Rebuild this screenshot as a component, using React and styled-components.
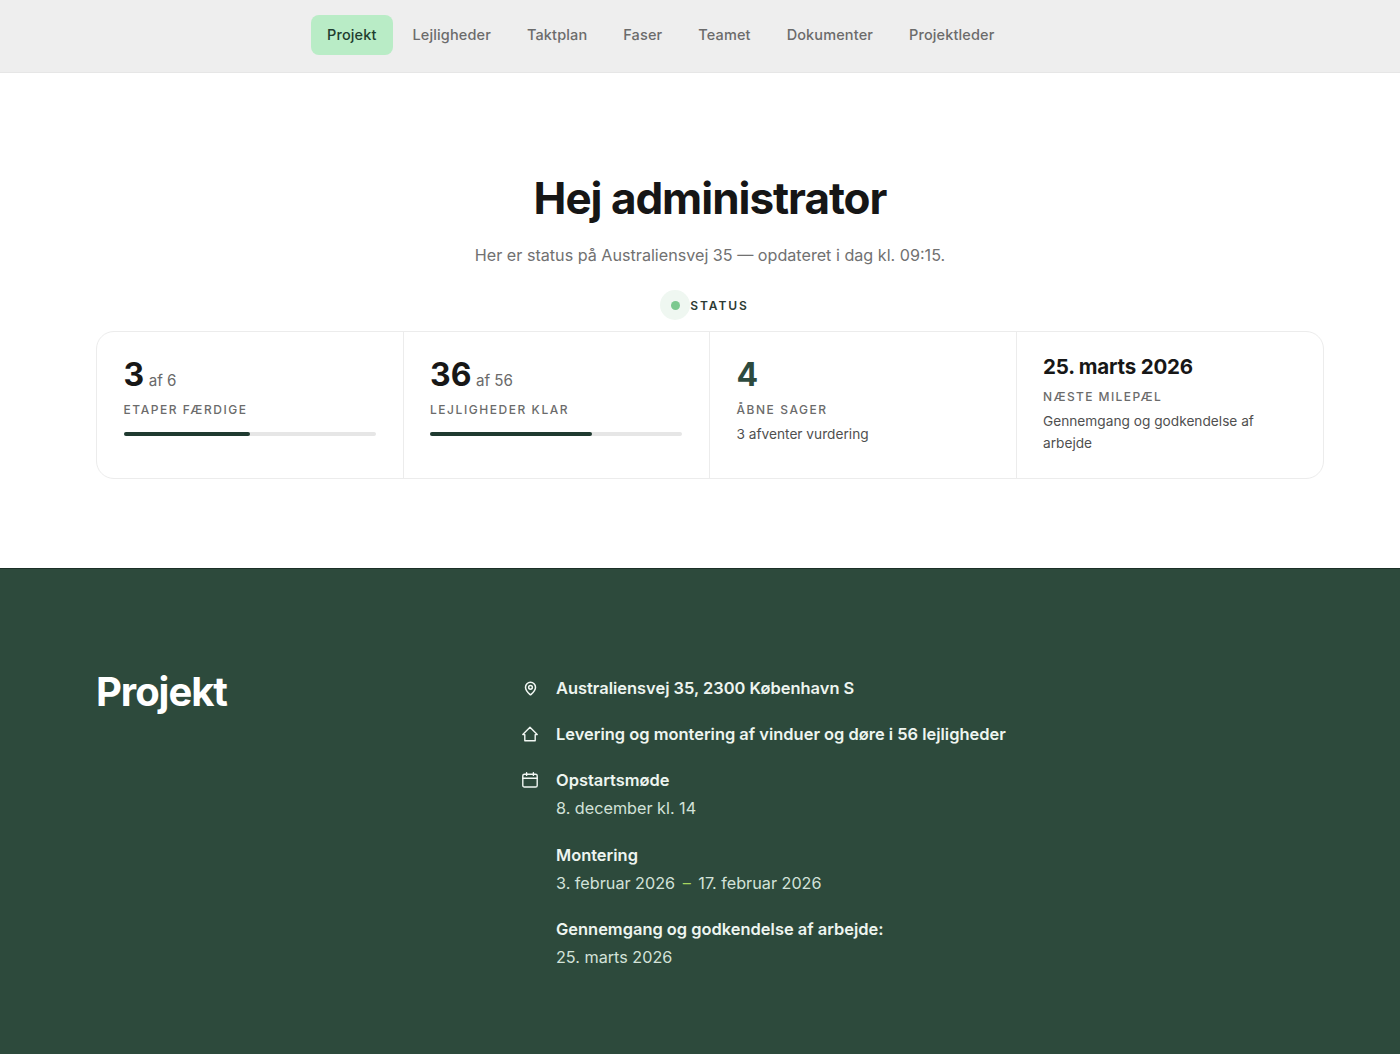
import React from 'react'
import styled, { createGlobalStyle } from 'styled-components'
import { MapPin } from 'lucide-react'

const GlobalStyle = createGlobalStyle`
  html, body {
    margin: 0;
    padding: 0;
    background: #fff;
    font-family: Inter, "Noto Sans", sans-serif;
  }
  * { box-sizing: border-box; }
`

const navItems = ['Projekt', 'Lejligheder', 'Taktplan', 'Faser', 'Teamet', 'Dokumenter', 'Projektleder']

const stats = [
  { value: '3', suffix: 'af 6', label: 'ETAPER FÆRDIGE', progress: 50 },
  { value: '36', suffix: 'af 56', label: 'LEJLIGHEDER KLAR', progress: 64.3 },
  { value: '4', green: true, label: 'ÅBNE SAGER', note: '3 afventer vurdering' },
]

const HouseIcon = () => (
  <svg width="16" height="16" viewBox="0 0 16 16" fill="none" stroke="currentColor" strokeWidth="1.4" strokeLinejoin="round">
    <path d="M0.8 8.6 L8 1.2 L15.2 8.6 H13.2 V14.8 H2.8 V8.6 Z" />
  </svg>
)

const CalendarIcon = () => (
  <svg width="16" height="16" viewBox="0 0 16 16" fill="none" stroke="currentColor" strokeWidth="1.4" strokeLinecap="round">
    <rect x="0.8" y="2.2" width="14.4" height="12.8" rx="1.6" />
    <path d="M0.8 6.2 H15.2 M4.6 0.7 V3.4 M11.4 0.7 V3.4" />
  </svg>
)

function App() {
  return (
    <>
      <GlobalStyle />
      <Nav>
        {navItems.map((item, i) => (
          <NavItem key={item} $active={i === 0}>{item}</NavItem>
        ))}
      </Nav>

      <Hero>
        <Title>Hej administrator</Title>
        <Subtitle>Her er status på Australiensvej 35 — opdateret i dag kl. 09:15.</Subtitle>
        <StatusRow>
          <StatusHalo><StatusDot /></StatusHalo>
          <StatusLabel>STATUS</StatusLabel>
        </StatusRow>

        <StatsCard>
          {stats.map((s) => (
            <StatCell key={s.label}>
              <BigLine>
                <BigNumber $green={s.green}>{s.value}</BigNumber>
                {s.suffix && <Suffix>{s.suffix}</Suffix>}
              </BigLine>
              <StatLabel>{s.label}</StatLabel>
              {s.progress && (
                <Track>
                  <Fill style={{ width: `${s.progress}%` }} />
                </Track>
              )}
              {s.note && <StatNote>{s.note}</StatNote>}
            </StatCell>
          ))}
          <StatCell>
            <DateValue>25. marts 2026</DateValue>
            <MilestoneLabel>NÆSTE MILEPÆL</MilestoneLabel>
            <MilestoneNote>Gennemgang og godkendelse af arbejde</MilestoneNote>
          </StatCell>
        </StatsCard>
      </Hero>

      <Footer>
        <FooterTitle>Projekt</FooterTitle>
        <InfoList>
          <InfoRow>
            <IconSlot><MapPin size={15} strokeWidth={2.4} /></IconSlot>
            <div><InfoTitle>Australiensvej 35, 2300 København S</InfoTitle></div>
          </InfoRow>
          <InfoRow>
            <IconSlot><HouseIcon /></IconSlot>
            <div><InfoTitle>Levering og montering af vinduer og døre i 56 lejligheder</InfoTitle></div>
          </InfoRow>
          <InfoRow>
            <IconSlot><CalendarIcon /></IconSlot>
            <div>
              <InfoTitle>Opstartsmøde</InfoTitle>
              <InfoValue>8. december kl. 14</InfoValue>
            </div>
          </InfoRow>
          <InfoRow>
            <IconSlot />
            <div>
              <InfoTitle>Montering</InfoTitle>
              <InfoValue>3. februar 2026 <Dash>–</Dash> 17. februar 2026</InfoValue>
            </div>
          </InfoRow>
          <InfoRow>
            <IconSlot />
            <div>
              <InfoTitle>Gennemgang og godkendelse af arbejde:</InfoTitle>
              <InfoValue>25. marts 2026</InfoValue>
            </div>
          </InfoRow>
        </InfoList>
      </Footer>
    </>
  )
}

const Nav = styled.nav`
  height: 73px;
  background: #eeeeee;
  border-bottom: 1px solid #e6e6e6;
  padding: 15px 0 0 311px;
  display: flex;
  align-items: flex-start;
  gap: 4px;
`

const NavItem = styled.a`
  height: 40px;
  padding: 0 16px 1px;
  border-radius: 8px;
  display: flex;
  align-items: center;
  font-size: 14.5px;
  font-weight: 500;
  letter-spacing: 0.13px;
  color: ${(p) => (p.$active ? '#1f3d2f' : '#6b6b6b')};
  background: ${(p) => (p.$active ? '#b9ecc6' : 'transparent')};
`

const Hero = styled.section`
  height: 495px;
  background: #fff;
  padding: 99px 0 0 20px;
  display: flex;
  flex-direction: column;
  align-items: center;
`

const Title = styled.h1`
  margin: 0;
  font-size: 44px;
  line-height: 52px;
  font-weight: 700;
  letter-spacing: -1.03px;
  color: #161616;
`

const Subtitle = styled.p`
  margin: 19px 0 0;
  font-size: 16.15px;
  line-height: 24px;
  font-weight: 400;
  color: #717171;
`

const StatusRow = styled.div`
  margin: 22px 11px 0 0;
  display: flex;
  align-items: center;
  height: 32px;
`

const StatusHalo = styled.span`
  width: 30px;
  height: 30px;
  border-radius: 50%;
  background: #eff7f1;
  display: flex;
  align-items: center;
  justify-content: center;
`

const StatusDot = styled.span`
  width: 9px;
  height: 9px;
  border-radius: 50%;
  background: #7cc98f;
`

const StatusLabel = styled.span`
  font-size: 12px;
  font-weight: 600;
  letter-spacing: 1.9px;
  color: #2c3a33;
`

const StatsCard = styled.div`
  margin-top: 10px;
  width: 1228px;
  height: 148px;
  border: 1px solid #ececec;
  border-radius: 18px;
  display: grid;
  grid-template-columns: repeat(4, 1fr);
`

const StatCell = styled.div`
  padding: 23px 27px 0 26.5px;
  border-right: 1px solid #ececec;
  &:last-child {
    border-right: none;
  }
`

const BigLine = styled.div`
  display: flex;
  align-items: baseline;
  gap: 4.5px;
  height: 40px;
`

const BigNumber = styled.span`
  font-size: 32px;
  line-height: 40px;
  font-weight: 700;
  color: ${(p) => (p.$green ? '#2d4a3e' : '#171717')};
`

const Suffix = styled.span`
  font-size: 15.2px;
  font-weight: 400;
  color: #6a6a6a;
`

const StatLabel = styled.div`
  margin-top: 7px;
  font-size: 12px;
  line-height: 16px;
  font-weight: 500;
  letter-spacing: 1.55px;
  color: #6b6b6b;
`

const Track = styled.div`
  margin-top: 14px;
  height: 4px;
  background: #e6e6e6;
  border-radius: 2px;
`

const Fill = styled.div`
  height: 100%;
  background: #1f3a30;
  border-radius: 2px;
`

const StatNote = styled.div`
  margin-top: 6px;
  font-size: 13.7px;
  line-height: 20px;
  color: #4f4f4f;
`

const DateValue = styled.div`
  margin-top: -2px;
  font-size: 20.5px;
  line-height: 28px;
  font-weight: 700;
  letter-spacing: -0.2px;
  color: #171717;
`

const MilestoneLabel = styled(StatLabel)`
  margin-top: 8px;
  letter-spacing: 1.4px;
`

const MilestoneNote = styled.div`
  margin-top: 5px;
  font-size: 13.7px;
  line-height: 22px;
  color: #4f4f4f;
`

const Footer = styled.footer`
  min-height: 486px;
  background: #2d4a3c;
  border-top: 1px solid #1c2f27;
  padding: 95px 96px 0;
  display: grid;
  grid-template-columns: 426px 1fr;
`

const FooterTitle = styled.h2`
  margin: 5px 0 0;
  font-size: 40px;
  line-height: 46px;
  font-weight: 700;
  letter-spacing: -1.05px;
  color: #ffffff;
`

const InfoList = styled.div`
  display: flex;
  flex-direction: column;
  gap: 18px;
  margin-top: 10px;
`

const InfoRow = styled.div`
  display: flex;
  gap: 18px;
`

const IconSlot = styled.span`
  width: 16px;
  height: 28px;
  flex: none;
  display: flex;
  align-items: center;
  justify-content: center;
  color: #f1f7f3;
`

const InfoTitle = styled.div`
  font-size: 16.45px;
  line-height: 28px;
  font-weight: 600;
  color: #eef5f0;
`

const InfoValue = styled.div`
  font-size: 16.2px;
  line-height: 28.5px;
  font-weight: 400;
  color: #d3e2d9;
`

const Dash = styled.span`
  color: #a6d65f;
  margin: 0 3px;
`

export default App
